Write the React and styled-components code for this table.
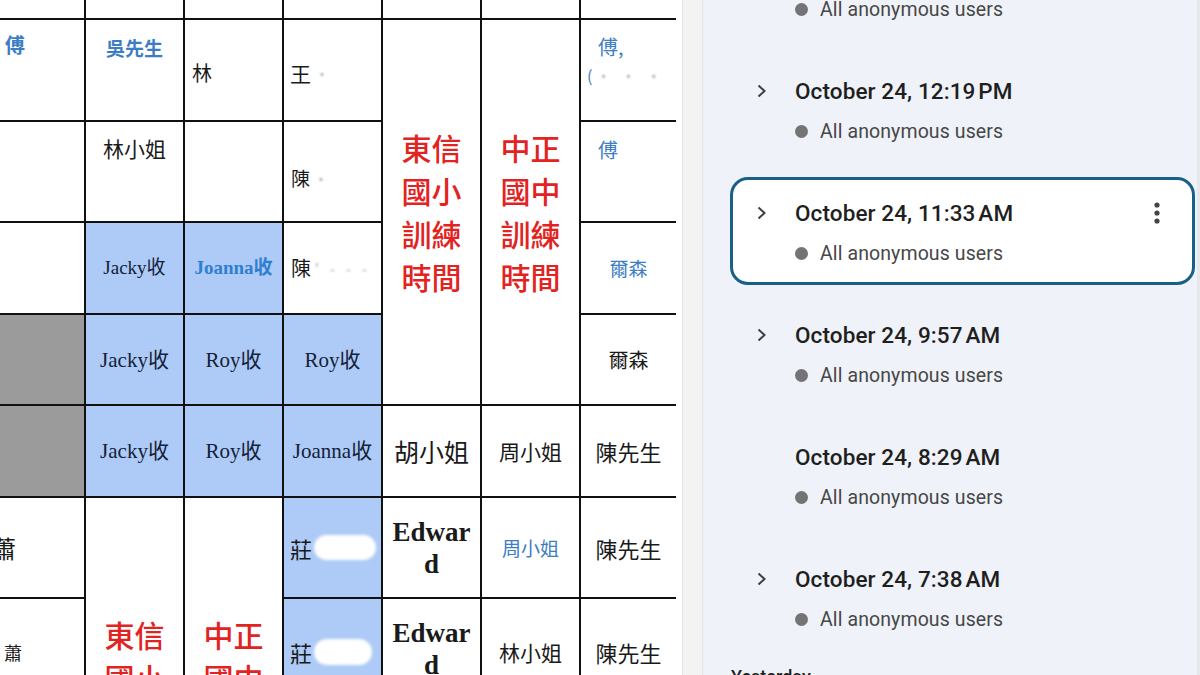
import React from 'react'
import styled, { createGlobalStyle } from 'styled-components'

const GlobalStyle = createGlobalStyle`
html, body {
  margin: 0;
  padding: 0;
  background: #ffffff;
}
`

const CJK = `"Noto Sans CJK TC", "Noto Sans CJK SC", sans-serif`
const SERIF = `"Liberation Serif", "Noto Sans CJK TC", serif`
const UI = `Roboto, "Noto Sans", sans-serif`

const Page = styled.div`
width: 1200px;
height: 675px;
display: flex;
overflow: hidden;
background: #fff;
`

const SheetArea = styled.div`
width: 682px;
flex: none;
background: #fff;
overflow: hidden;
`

const Grid = styled.div`
display: grid;
grid-template-columns: 84px 97px 97px 97px 97px 97px 95px;
grid-template-rows: 18px 100px 99px 90px 89px 90px 99px 99px 99px 99px;
gap: 2px;
width: 676px;
background: #111;
`

const Cell = styled.div`
grid-column: ${p => p.$col};
grid-row: ${p => p.$row} / span ${p => p.$span || 1};
background: ${p => p.$bg || '#fff'};
display: flex;
flex-direction: column;
align-items: ${p => p.$justify || 'center'};
justify-content: ${p => p.$align || 'center'};
padding: ${p => p.$pad || '0'};
box-sizing: border-box;
overflow: hidden;
white-space: nowrap;
text-indent: ${p => p.$indent || 0};
`

const Txt = styled.span`
font-family: ${p => (p.$serif ? SERIF : CJK)};
font-size: ${p => p.$size || 20}px;
font-weight: ${p => (p.$bold ? 700 : 400)};
color: ${p => p.$color || '#1a1a1a'};
line-height: ${p => p.$lh || 28}px;
display: flex;
flex-direction: ${p => (p.$stack ? 'column' : 'row')};
align-items: center;
`

const Blob = styled.span`
display: inline-block;
width: ${p => p.$w || 60}px;
height: ${p => p.$h || 24}px;
margin-left: 2px;
border-radius: 14px;
background: #fff;
filter: blur(1.5px);
`

const Smudge = styled.span`
font-family: ${CJK};
font-size: 14px;
color: #9aa3ad;
letter-spacing: 4px;
filter: blur(1px);
margin-left: 4px;
`

const RedBlock = styled.div`
width: 60px;
font-family: ${CJK};
font-size: 30px;
font-weight: 500;
line-height: 43px;
color: #e2231f;
white-space: normal;
text-align: center;
`

const Divider = styled.div`
width: 19px;
flex: none;
background: #f3f3f3;
border-left: 1px solid #e4e4e4;
`

const Panel = styled.aside`
flex: 1;
background: #eff2f8;
border-left: 1px solid #e2e4e8;
border-right: 3px solid #e6e7ea;
padding-left: 27px;
overflow: hidden;
font-family: ${UI};
`

const List = styled.div`
display: flex;
flex-direction: column;
gap: 14px;
margin-top: -31px;
`

const Entry = styled.div`
border: 3px solid ${p => (p.$active ? '#1a5f87' : 'transparent')};
background: ${p => (p.$active ? '#ffffff' : 'transparent')};
border-radius: 18px;
padding: 15px 26px 11px 24px;
width: 465px;
box-sizing: border-box;
`

const TitleRow = styled.div`
height: 36px;
display: flex;
align-items: center;
`

const ChevronSlot = styled.div`
width: 38px;
flex: none;
display: flex;
align-items: center;
`

const Title = styled.div`
flex: 1;
font-size: 22.5px;
font-weight: 500;
color: #1f1f1f;
letter-spacing: 0.1px;
`

const SubRow = styled.div`
height: 36px;
margin-top: 4px;
margin-left: 38px;
display: flex;
align-items: center;
`

const Dot = styled.span`
width: 13px;
height: 13px;
border-radius: 50%;
background: #747474;
margin-right: 12px;
flex: none;
`

const Sub = styled.span`
font-size: 19.5px;
color: #474747;
letter-spacing: 0.1px;
`

const DayHeader = styled.div`
margin-top: 14px;
margin-left: 1px;
font-size: 18px;
font-weight: 500;
color: #1f1f1f;
line-height: 24px;
`

const Chevron = () => (
  <svg width="10" height="14" viewBox="0 0 10 14">
    <polyline points="1.5,1.5 7.5,7 1.5,12.5" fill="none" stroke="#3c4043" strokeWidth="2" />
  </svg>
)

const Kebab = () => (
  <svg width="18" height="22" viewBox="0 0 18 22">
    <circle cx="9" cy="3" r="2.6" fill="#444" />
    <circle cx="9" cy="11" r="2.6" fill="#444" />
    <circle cx="9" cy="19" r="2.6" fill="#444" />
  </svg>
)

const BLUE = '#3d7dc2'
const LIGHT = '#adcbf6'
const GRAY = '#9b9b9b'
const INK = '#14213a'

const versions = [
  { partial: true },
  { title: 'October 24, 12:19\u202FPM', chevron: true },
  { title: 'October 24, 11:33\u202FAM', chevron: true, active: true },
  { title: 'October 24, 9:57\u202FAM', chevron: true },
  { title: 'October 24, 8:29\u202FAM', chevron: false },
  { title: 'October 24, 7:38\u202FAM', chevron: true },
]

const Sheet = () => (
  <Grid>
    {[1, 2, 3, 4, 5, 6, 7].map(c => <Cell key={'t' + c} $col={c} $row={1} />)}

    <Cell $col={1} $row={2} $justify="flex-start" $align="flex-start" $pad="11px 0 0 5px">
      <Txt $size={20} $color={BLUE} $bold>傅</Txt>
    </Cell>
    <Cell $col={2} $row={2} $align="flex-start" $pad="14px 0 0 0">
      <Txt $size={19} $color={BLUE} $bold>吳先生</Txt>
    </Cell>
    <Cell $col={3} $row={2} $justify="flex-start" $pad="6px 0 0 7px">
      <Txt $size={20}>林</Txt>
    </Cell>
    <Cell $col={4} $row={2} $justify="flex-start" $pad="6px 0 0 6px">
      <Txt $size={21}>王<Smudge>   ·</Smudge></Txt>
    </Cell>
    <Cell $col={5} $row={2} $span={4}>
      <RedBlock>東信國小訓練時間</RedBlock>
    </Cell>
    <Cell $col={6} $row={2} $span={4}>
      <RedBlock>中正國中訓練時間</RedBlock>
    </Cell>
    <Cell $col={7} $row={2} $justify="flex-start" $align="flex-start" $pad="13px 0 0 6px">
      <Txt $size={20} $color={BLUE} style={{ marginLeft: 11 }}>傅,</Txt>
      <Txt $size={16} $color={BLUE}>(<Smudge>· · · ·</Smudge></Txt>
    </Cell>

    <Cell $col={1} $row={3} />
    <Cell $col={2} $row={3} $align="flex-start" $pad="12px 0 0 0">
      <Txt $size={21}>林小姐</Txt>
    </Cell>
    <Cell $col={3} $row={3} />
    <Cell $col={4} $row={3} $justify="flex-start" $pad="12px 0 0 7px">
      <Txt $size={19}>陳<Smudge>      ·</Smudge></Txt>
    </Cell>
    <Cell $col={7} $row={3} $justify="flex-start" $align="flex-start" $pad="14px 0 0 17px">
      <Txt $size={20} $color={BLUE}>傅</Txt>
    </Cell>

    <Cell $col={1} $row={4} />
    <Cell $col={2} $row={4} $bg={LIGHT}>
      <Txt $serif $size={19} $color={INK}>Jacky收</Txt>
    </Cell>
    <Cell $col={3} $row={4} $bg={LIGHT}>
      <Txt $serif $bold $size={19} $color="#2f7fd0">Joanna收</Txt>
    </Cell>
    <Cell $col={4} $row={4} $justify="flex-start" $pad="0 0 0 7px">
      <Txt $size={20}>陳<Smudge>' - - -</Smudge></Txt>
    </Cell>
    <Cell $col={7} $row={4}>
      <Txt $size={19} $color={BLUE}>爾森</Txt>
    </Cell>

    <Cell $col={1} $row={5} $bg={GRAY} />
    <Cell $col={2} $row={5} $bg={LIGHT}>
      <Txt $serif $size={21} $color={INK}>Jacky收</Txt>
    </Cell>
    <Cell $col={3} $row={5} $bg={LIGHT}>
      <Txt $serif $size={21} $color={INK}>Roy收</Txt>
    </Cell>
    <Cell $col={4} $row={5} $bg={LIGHT}>
      <Txt $serif $size={21} $color={INK}>Roy收</Txt>
    </Cell>
    <Cell $col={7} $row={5}>
      <Txt $size={20}>爾森</Txt>
    </Cell>

    <Cell $col={1} $row={6} $bg={GRAY} />
    <Cell $col={2} $row={6} $bg={LIGHT}>
      <Txt $serif $size={21} $color={INK}>Jacky收</Txt>
    </Cell>
    <Cell $col={3} $row={6} $bg={LIGHT}>
      <Txt $serif $size={21} $color={INK}>Roy收</Txt>
    </Cell>
    <Cell $col={4} $row={6} $bg={LIGHT}>
      <Txt $serif $size={21} $color={INK}>Joanna收</Txt>
    </Cell>
    <Cell $col={5} $row={6}>
      <Txt $size={25}>胡小姐</Txt>
    </Cell>
    <Cell $col={6} $row={6}>
      <Txt $size={21}>周小姐</Txt>
    </Cell>
    <Cell $col={7} $row={6}>
      <Txt $size={22}>陳先生</Txt>
    </Cell>

    <Cell $col={1} $row={7} $justify="flex-start" $indent="-8px">
      <Txt $size={24}>蕭</Txt>
    </Cell>
    <Cell $col={2} $row={7} $span={4}>
      <RedBlock>東信國小訓練時間</RedBlock>
    </Cell>
    <Cell $col={3} $row={7} $span={4}>
      <RedBlock>中正國中訓練時間</RedBlock>
    </Cell>
    <Cell $col={4} $row={7} $bg={LIGHT} $justify="flex-start" $pad="0 0 0 6px">
      <Txt $size={22}>莊<Blob $w={62} $h={25} /></Txt>
    </Cell>
    <Cell $col={5} $row={7}>
      <Txt $serif $bold $stack $size={27} $lh={32}>
        <span>Edwar</span><span>d</span>
      </Txt>
    </Cell>
    <Cell $col={6} $row={7}>
      <Txt $size={19} $color={BLUE}>周小姐</Txt>
    </Cell>
    <Cell $col={7} $row={7}>
      <Txt $size={22}>陳先生</Txt>
    </Cell>

    <Cell $col={1} $row={8} $justify="flex-start" $pad="6px 0 0 4px">
      <Txt $size={18}>蕭</Txt>
    </Cell>
    <Cell $col={4} $row={8} $bg={LIGHT} $justify="flex-start" $pad="6px 0 0 6px">
      <Txt $size={22}>莊<Blob $w={58} $h={26} /></Txt>
    </Cell>
    <Cell $col={5} $row={8}>
      <Txt $serif $bold $stack $size={27} $lh={32}>
        <span>Edwar</span><span>d</span>
      </Txt>
    </Cell>
    <Cell $col={6} $row={8} $pad="6px 0 0 0">
      <Txt $size={21}>林小姐</Txt>
    </Cell>
    <Cell $col={7} $row={8} $pad="6px 0 0 0">
      <Txt $size={22}>陳先生</Txt>
    </Cell>

    {[9, 10].map(r => (
      <React.Fragment key={'r' + r}>
        <Cell $col={1} $row={r} />
        <Cell $col={4} $row={r} />
        <Cell $col={5} $row={r} />
        <Cell $col={6} $row={r} />
        <Cell $col={7} $row={r} />
      </React.Fragment>
    ))}
  </Grid>
)

const VersionHistory = () => (
  <Panel>
    <List>
      {versions.map((v, i) => (
        <Entry key={i} $active={v.active}>
          {!v.partial && (
            <TitleRow>
              <ChevronSlot>{v.chevron && <Chevron />}</ChevronSlot>
              <Title>{v.title}</Title>
              {v.active && <Kebab />}
            </TitleRow>
          )}
          <SubRow>
            <Dot />
            <Sub>All anonymous users</Sub>
          </SubRow>
        </Entry>
      ))}
    </List>
    <DayHeader>Yesterday</DayHeader>
  </Panel>
)

export default function App() {
  return (
    <Page>
      <GlobalStyle />
      <SheetArea>
        <Sheet />
      </SheetArea>
      <Divider />
      <VersionHistory />
    </Page>
  )
}
